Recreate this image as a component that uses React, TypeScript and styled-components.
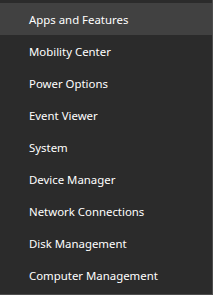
import styled, { createGlobalStyle } from "styled-components";

const Global = createGlobalStyle`
  html, body {
    margin: 0;
    padding: 0;
    background: #2b2b2b;
  }
`;

const Menu = styled.ul`
  list-style: none;
  margin: 0;
  width: 212px;
  padding: 3px 0;
  background: #2b2b2b;
  border-right: 1px solid #4d4d4d;
  border-bottom: 1px solid #4d4d4d;
  font-family: "Noto Sans", "Open Sans", sans-serif;
  font-size: 11.4px;
  color: #ffffff;
`;

const Item = styled.li<{ $active?: boolean }>`
  height: 32px;
  display: flex;
  align-items: center;
  padding-left: 29px;
  background: ${(p) => (p.$active ? "#414141" : "transparent")};
  cursor: default;
`;

const items = [
  "Apps and Features",
  "Mobility Center",
  "Power Options",
  "Event Viewer",
  "System",
  "Device Manager",
  "Network Connections",
  "Disk Management",
  "Computer Management",
];

export default function App() {
  return (
    <>
      <Global />
      <Menu>
        {items.map((label, i) => (
          <Item key={label} $active={i === 0}>
            {label}
          </Item>
        ))}
      </Menu>
    </>
  );
}
